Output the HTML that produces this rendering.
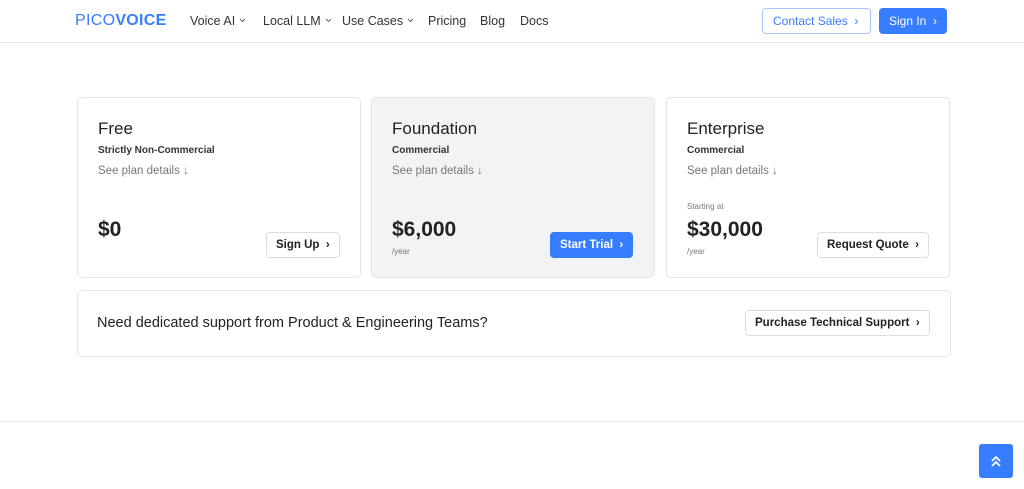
<!DOCTYPE html><html><head><style>
*{box-sizing:border-box;margin:0;padding:0}
body{width:1024px;height:489px;background:#fff;font-family:"Liberation Sans",sans-serif;color:#222;position:relative;overflow:hidden}
.a{position:absolute;white-space:nowrap}
.hdr{left:0;top:0;width:1024px;height:43px;border-bottom:1px solid #e8e8ea}
.nav{top:14px;font-size:12.5px;color:#333}
.nav svg{margin-left:4px;vertical-align:2px}
.card{border:1px solid #e4e5e8;border-radius:5px;top:97px;height:181px;width:284px}
.t{font-size:17px;left:20px;top:21px;color:#222}
.s{font-size:10px;font-weight:bold;left:20px;top:47px;color:#333}
.d{font-size:11.5px;left:20px;top:67px;color:#777}
.p{font-size:21px;font-weight:bold;left:20px;top:120px}
.y{font-size:8px;color:#777;left:20px;top:149px}
.btn{height:26px;border:1px solid #dcdde0;border-radius:4px;font-size:11.5px;font-weight:bold;line-height:24px;padding:0 9px;background:#fff;color:#222}
.blue{background:#377dff;border-color:#377dff;color:#fff}
</style></head><body>
<div class="a hdr"></div>
<div class="a" style="left:75px;top:12px;font-size:16px;color:#377dff;letter-spacing:0.3px">PICO<b>VOICE</b></div>
<div class="a nav" style="left:190px">Voice AI<svg width="7" height="5" viewBox="0 0 7 5"><path d="M1 1l2.5 2.5L6 1" stroke="#666" fill="none"/></svg></div>
<div class="a nav" style="left:263px">Local LLM<svg width="7" height="5" viewBox="0 0 7 5"><path d="M1 1l2.5 2.5L6 1" stroke="#666" fill="none"/></svg></div>
<div class="a nav" style="left:342px">Use Cases<svg width="7" height="5" viewBox="0 0 7 5"><path d="M1 1l2.5 2.5L6 1" stroke="#666" fill="none"/></svg></div>
<div class="a nav" style="left:428px">Pricing</div>
<div class="a nav" style="left:480px">Blog</div>
<div class="a nav" style="left:520px">Docs</div>
<div class="a btn" style="left:762px;top:8px;border-color:#a9c6ff;color:#377dff;font-weight:normal;font-size:12px;padding:0 10px;width:109px">Contact Sales &nbsp;›</div>
<div class="a btn blue" style="left:879px;top:8px;font-weight:normal;font-size:12px;padding:0 9px;width:68px;text-align:center">Sign In &nbsp;›</div>

<div class="a card" style="left:77px">
<div class="a t">Free</div><div class="a s">Strictly Non-Commercial</div><div class="a d">See plan details ↓</div>
<div class="a p" style="top:120px">$0</div>
<div class="a btn" style="left:188px;top:134px">Sign Up &nbsp;›</div></div>
<div class="a card" style="left:371px;background:#f2f3f5">
<div class="a t">Foundation</div><div class="a s">Commercial</div><div class="a d">See plan details ↓</div>
<div class="a p">$6,000</div><div class="a y">/year</div>
<div class="a btn blue" style="left:178px;top:134px">Start Trial &nbsp;›</div></div>
<div class="a card" style="left:666px">
<div class="a t">Enterprise</div><div class="a s">Commercial</div><div class="a d">See plan details ↓</div>
<div class="a y" style="top:104px">Starting at</div>
<div class="a p">$30,000</div><div class="a y">/year</div>
<div class="a btn" style="left:150px;top:134px">Request Quote &nbsp;›</div></div>

<div class="a" style="left:77px;top:290px;width:874px;height:67px;border:1px solid #e4e5e8;border-radius:5px">
<div class="a" style="left:19px;top:24px;font-size:14.5px;color:#222">Need dedicated support from Product &amp; Engineering Teams?</div>
<div class="a btn" style="left:667px;top:19px">Purchase Technical Support &nbsp;›</div></div>
<div class="a" style="left:0;top:421px;width:1024px;border-top:1px solid #ececee"></div>
<div class="a" style="left:979px;top:444px;width:34px;height:34px;background:#377dff;border-radius:3px;text-align:center">
<svg width="12" height="14" viewBox="0 0 12 14" style="margin-top:10px"><path d="M2 7l4-4 4 4M2 12l4-4 4 4" stroke="#fff" stroke-width="1.8" fill="none"/></svg></div>
</body></html>
